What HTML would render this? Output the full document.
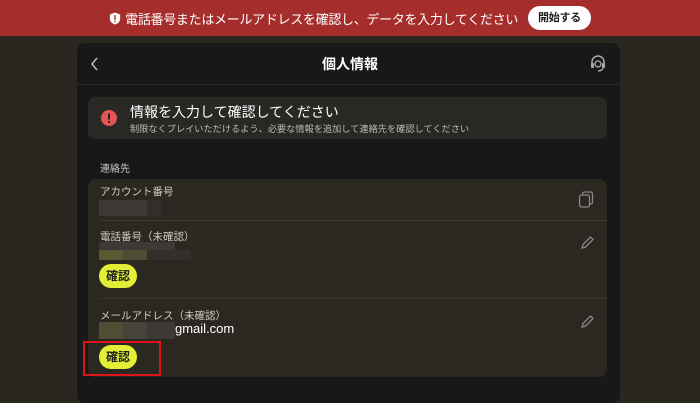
<!DOCTYPE html><html><head><meta charset="utf-8"><style>
*{margin:0;padding:0;box-sizing:border-box}
body{width:700px;height:400px;overflow:hidden;background:#2a2721;font-family:"Liberation Sans","Noto Sans CJK JP",sans-serif;position:relative;color:#fff}
.ab{position:absolute}
.banner{left:0;top:0;width:700px;height:36px;background:#a52d2c;display:flex;align-items:center;justify-content:center;font-size:13px;letter-spacing:-0.3px}
.btn{background:#fff;color:#222;border-radius:14px;padding:0 10px;height:24px;line-height:24px;font-size:11px;font-weight:bold;margin-left:10px}
.panel{left:77px;top:43px;width:543px;height:360px;background:#181818;border-radius:8px}
.y{background:#e2ef36;color:#222;font-size:12px;font-weight:bold;border-radius:12px;width:38px;height:24px;line-height:24px;text-align:center}
.lab{font-size:10.5px;color:#cfcbc4}
</style></head><body>
<div class="ab banner"><svg width="12" height="15" viewBox="0 0 14 16"><path d="M7 1L13 3.5V8C13 11.5 10.5 14 7 15C3.5 14 1 11.5 1 8V3.5Z" fill="#fff"/><rect x="6.2" y="4" width="1.6" height="6" fill="#a52d2c"/><circle cx="7" cy="11.8" r="0.9" fill="#a52d2c"/></svg><span style="margin-left:4px">電話番号またはメールアドレスを確認し、データを入力してください</span><span class="btn">開始する</span></div>
<div class="ab panel"></div>
<svg class="ab" style="left:90px;top:56px" width="10" height="16"><path d="M7 2L2 8L7 14" stroke="#bbb" stroke-width="1.5" fill="none"/></svg>
<div class="ab" style="left:0;width:700px;top:54px;text-align:center;font-size:14px;font-weight:bold">個人情報</div>
<svg class="ab" style="left:589px;top:54px" width="18" height="18" viewBox="0 0 18 18"><path d="M3 10V8a6 6 0 0112 0v2" stroke="#aaa" stroke-width="1.5" fill="none"/><rect x="2" y="9" width="3" height="5" rx="1" fill="#aaa"/><rect x="13" y="9" width="3" height="5" rx="1" fill="#aaa"/><circle cx="9" cy="10" r="3" stroke="#aaa" stroke-width="1.3" fill="none"/><path d="M14 14q-1 3-5 3" stroke="#aaa" stroke-width="1.3" fill="none"/></svg>
<div class="ab" style="left:77px;top:84px;width:543px;height:1px;background:#2c2c2c"></div>
<div class="ab" style="left:88px;top:97px;width:519px;height:42px;background:#2a2825;border-radius:7px"></div>
<svg class="ab" style="left:101px;top:110px" width="16" height="16"><circle cx="8" cy="8" r="8" fill="#e25555"/><rect x="7" y="3.5" width="2" height="6" fill="#222"/><circle cx="8" cy="12" r="1.1" fill="#222"/></svg>
<div class="ab" style="left:130px;top:102px;font-size:14px">情報を入力して確認してください</div>
<div class="ab" style="left:130px;top:121px;font-size:9.2px;color:#bbb">制限なくプレイいただけるよう、必要な情報を追加して連絡先を確認してください</div>
<div class="ab lab" style="left:100px;top:160px;font-size:10px">連絡先</div>
<div class="ab" style="left:88px;top:179px;width:519px;height:198px;background:#2b2721;border-radius:8px"></div>
<div class="ab" style="left:99px;top:220px;width:508px;height:1px;background:#3a3630"></div>
<div class="ab" style="left:99px;top:298px;width:508px;height:1px;background:#3a3630"></div>
<div class="ab lab" style="left:100px;top:184px">アカウント番号</div>
<div class="ab" style="left:99px;top:200px;width:48px;height:16px;background:#3c3936"></div>
<div class="ab" style="left:147px;top:200px;width:14px;height:16px;background:#322f2b"></div>
<svg class="ab" style="left:578px;top:191px" width="16" height="18"><rect x="4.5" y="1" width="10" height="12" rx="2" stroke="#888" fill="none" stroke-width="1.3"/><rect x="1.5" y="4" width="10" height="12" rx="2" stroke="#888" fill="#2b2721" stroke-width="1.3"/></svg>
<div class="ab lab" style="left:100px;top:229px">電話番号（未確認）</div>
<div class="ab" style="left:99px;top:242px;width:76px;height:8px;background:#3c3936"></div>
<div class="ab" style="left:99px;top:250px;width:24px;height:10px;background:#5a5a32"></div>
<div class="ab" style="left:123px;top:250px;width:24px;height:10px;background:#4e4d33"></div>
<div class="ab" style="left:147px;top:250px;width:44px;height:10px;background:#33302b"></div>
<div class="ab y" style="left:99px;top:264px">確認</div>
<svg class="ab" style="left:579px;top:235px" width="16" height="16"><path d="M3 13L4 9.5L11.5 2L14 4.5L6.5 12Z" stroke="#888" fill="none" stroke-width="1.3"/></svg>
<div class="ab lab" style="left:100px;top:308px">メールアドレス（未確認）</div>
<div class="ab" style="left:99px;top:322px;width:24px;height:17px;background:#4f4e34"></div>
<div class="ab" style="left:123px;top:322px;width:24px;height:17px;background:#46443a"></div>
<div class="ab" style="left:147px;top:322px;width:28px;height:17px;background:#3c3936"></div>
<div class="ab" style="left:175px;top:321px;font-size:13px">gmail.com</div>
<svg class="ab" style="left:579px;top:314px" width="16" height="16"><path d="M3 13L4 9.5L11.5 2L14 4.5L6.5 12Z" stroke="#888" fill="none" stroke-width="1.3"/></svg>
<div class="ab y" style="left:99px;top:345px">確認</div>
<div class="ab" style="left:83px;top:341px;width:78px;height:35px;border:2px solid #e0121a"></div>
</body></html>
